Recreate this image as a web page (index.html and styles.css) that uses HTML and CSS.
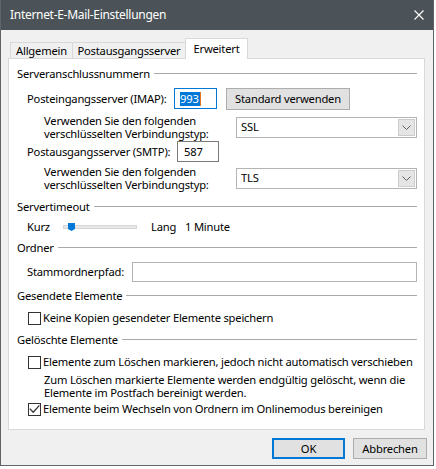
FILE: index.html
```html
<!DOCTYPE html>
<html lang="de">
<head>
<meta charset="utf-8">
<title>Internet-E-Mail-Einstellungen</title>
<link rel="stylesheet" href="styles.css">
</head>
<body>
<div class="dialog">
  <div class="titlebar">
    <span class="title">Internet-E-Mail-Einstellungen</span>
    <svg class="close" width="10" height="10" viewBox="0 0 10 10"><path d="M0.5 0.5L9.5 9.5M9.5 0.5L0.5 9.5" stroke="#ffffff" stroke-width="1.1" fill="none"/></svg>
  </div>
  <div class="client">
    <div class="tabs">
      <div class="tab tab-general">Allgemein</div>
      <div class="tab tab-outgoing">Postausgangsserver</div>
      <div class="tab tab-advanced active">Erweitert</div>
    </div>
    <div class="panel">
      <div class="group-head head-ports"><span class="group-title">Serveranschlussnummern</span><span class="rule"></span></div>
      <div class="row row-imap">
        <span class="label label-imap">Posteingangsserver (IMAP):</span>
        <span class="textbox focused port-in"><span class="selection">993</span><span class="caret"></span></span>
        <span class="button btn-default">Standard verwenden</span>
      </div>
      <div class="row row-enc enc-in">
        <span class="label label-enc">Verwenden Sie den folgenden<br>verschlüsselten Verbindungstyp:</span>
        <span class="combo"><span class="combo-value">SSL</span><span class="combo-arrow"><svg width="9" height="5" viewBox="0 0 9 5"><path d="M0.5 0.5L4.5 4.5L8.5 0.5" stroke="#606060" stroke-width="1" fill="none"/></svg></span></span>
      </div>
      <div class="row row-smtp">
        <span class="label label-smtp">Postausgangsserver (SMTP):</span>
        <span class="textbox port-out">587</span>
      </div>
      <div class="row row-enc enc-out">
        <span class="label label-enc">Verwenden Sie den folgenden<br>verschlüsselten Verbindungstyp:</span>
        <span class="combo"><span class="combo-value">TLS</span><span class="combo-arrow"><svg width="9" height="5" viewBox="0 0 9 5"><path d="M0.5 0.5L4.5 4.5L8.5 0.5" stroke="#606060" stroke-width="1" fill="none"/></svg></span></span>
      </div>

      <div class="group-head head-timeout"><span class="group-title">Servertimeout</span><span class="rule"></span></div>
      <div class="row row-slider">
        <span class="label label-short">Kurz</span>
        <span class="slider"><span class="track"></span><svg class="thumb" width="7" height="8" viewBox="0 0 7 8"><path d="M0 0H7V6L3.5 8L0 6Z" fill="#0078d7"/></svg></span>
        <span class="label label-long">Lang</span>
        <span class="label label-value">1 Minute</span>
      </div>

      <div class="group-head head-folder"><span class="group-title">Ordner</span><span class="rule"></span></div>
      <div class="row row-root">
        <span class="label label-root">Stammordnerpfad:</span>
        <span class="textbox root-path"></span>
      </div>

      <div class="group-head head-sent"><span class="group-title">Gesendete Elemente</span><span class="rule"></span></div>
      <div class="row row-check cb-sent">
        <span class="checkbox"></span>
        <span class="check-label">Keine Kopien gesendeter Elemente speichern</span>
      </div>

      <div class="group-head head-deleted"><span class="group-title">Gelöschte Elemente</span><span class="rule"></span></div>
      <div class="row row-check cb-mark">
        <span class="checkbox"></span>
        <span class="check-label">Elemente zum Löschen markieren, jedoch nicht automatisch verschieben</span>
      </div>
      <div class="note">Zum Löschen markierte Elemente werden endgültig gelöscht, wenn die<br>Elemente im Postfach bereinigt werden.</div>
      <div class="row row-check cb-purge">
        <span class="checkbox checked"><svg width="11" height="11" viewBox="0 0 11 11"><path d="M0.8 4.6L4.2 8.2L10.4 1.4" stroke="#333333" stroke-width="1.3" fill="none"/></svg></span>
        <span class="check-label">Elemente beim Wechseln von Ordnern im Onlinemodus bereinigen</span>
      </div>
    </div>
    <div class="buttons">
      <span class="button btn-ok">OK</span>
      <span class="button btn-cancel">Abbrechen</span>
    </div>
  </div>
</div>
</body>
</html>
```
FILE: styles.css
```css
* { box-sizing: border-box; }
html, body { margin: 0; padding: 0; }
body {
  width: 436px;
  height: 469px;
  overflow: hidden;
  background: #ffffff;
  font-family: "Segoe UI", "Noto Sans", "Open Sans", sans-serif;
  font-size: 11.2px;
  letter-spacing: -0.2px;
  color: #000000;
}
.dialog {
  width: 434px;
  height: 466px;
  border: 1px solid #5f6468;
  border-top: 0;
  background: #f0f0f0;
  display: flex;
  flex-direction: column;
}
.titlebar {
  height: 30px;
  flex: none;
  background: #4b5358;
  color: #ffffff;
  display: flex;
  align-items: center;
  justify-content: space-between;
  padding: 0 9px 0 9px;
}
.title { font-size: 12px; letter-spacing: -0.3px; line-height: 16px; }
.close { display: block; }

.client {
  flex: 1;
  display: flex;
  flex-direction: column;
  padding: 8px 6px 0 7px;
}
.tabs {
  display: flex;
  align-items: flex-end;
  height: 20px;
  padding-left: 2px;
}
.tab {
  height: 16px;
  border: 1px solid #d9d9d9;
  border-bottom: 0;
  background: #f0f0f0;
  display: flex;
  align-items: center;
  justify-content: center;
  margin-right: -1px;
  line-height: 14px;
  white-space: nowrap;
}
.tab-general { width: 63px; }
.tab-outgoing { width: 114px; }
.tab-advanced { width: 63px; }
.tab.active {
  height: 21px;
  background: #ffffff;
  margin-bottom: -1px;
  position: relative;
  z-index: 1;
  padding-bottom: 1px;
}
.panel {
  width: 417px;
  height: 372px;
  flex: none;
  border: 1px solid #d9d9d9;
  background: #ffffff;
  padding: 7px 7px 0 8px;
  display: flex;
  flex-direction: column;
}
.group-head {
  height: 16px;
  display: flex;
  align-items: center;
  line-height: 16px;
  white-space: nowrap;
}
.rule {
  flex: 1;
  height: 1px;
  background: #a9a9a9;
  margin-left: 4px;
  margin-top: -1px;
}
.row {
  display: flex;
  align-items: center;
  white-space: nowrap;
}
.label { flex: none; line-height: 14px; }
.row-imap { height: 21px; margin-top: 6px; padding-left: 10px; }
.row-smtp { height: 21px; margin-top: 1px; padding-left: 10px; }
.row-enc { height: 26px; padding-left: 27px; }
.enc-in { margin-top: 5px; }
.enc-out { margin-top: 3px; }
.label-imap { width: 147px; }
.label-smtp { width: 150px; }
.label-enc { width: 192px; line-height: 13px; }

.textbox {
  display: flex;
  align-items: center;
  height: 21px;
  border: 1px solid #7a7a7a;
  background: #ffffff;
  flex: none;
}
.port-in {
  width: 43px;
  border-color: #0078d7;
  padding-left: 5px;
}
.selection {
  background: #0078d7;
  color: #ffffff;
  line-height: 14px;
  height: 14px;
  padding: 0 1px 0 0;
}
.caret {
  width: 1px;
  height: 14px;
  background: #e8761c;
}
.port-out { width: 42px; padding-left: 6px; }

.button {
  display: flex;
  align-items: center;
  justify-content: center;
  background: #e1e1e1;
  border: 1px solid #adadad;
  height: 21px;
  flex: none;
  line-height: 14px;
}
.btn-default { width: 124px; height: 22px; margin-left: 9px; }

.combo {
  display: flex;
  align-items: center;
  width: 181px;
  height: 21px;
  border: 1px solid #b4b4b4;
  background: #ffffff;
  padding: 1px;
  flex: none;
}
.combo-value { flex: 1; padding-left: 3px; line-height: 14px; }
.combo-arrow {
  width: 17px;
  height: 17px;
  background: #e5e5e5;
  border: 1px solid #cccccc;
  display: flex;
  align-items: center;
  justify-content: center;
}
.combo-arrow svg { display: block; }

.head-timeout { margin-top: 8px; }
.row-slider { height: 16px; margin-top: 4px; padding-left: 10px; }
.label-short { width: 36px; }
.slider {
  position: relative;
  width: 74px;
  height: 8px;
  flex: none;
  display: flex;
  align-items: center;
}
.track {
  width: 74px;
  height: 4px;
  background: #e7e7e7;
  border: 1px solid #d6d6d6;
}
.thumb {
  position: absolute;
  left: 5px;
  top: 0;
  display: block;
}
.label-long { margin-left: 14px; width: 34px; }

.head-folder { margin-top: 5px; }
.row-root { height: 20px; margin-top: 6px; padding-left: 10px; }
.label-root { width: 105px; }
.root-path { width: 285px; height: 20px; border-color: #b4b4b4; }

.head-sent { margin-top: 6px; }
.row-check { height: 16px; margin-top: 6px; padding-left: 11px; }
.checkbox {
  width: 13px;
  height: 13px;
  border: 1px solid #333333;
  background: #ffffff;
  flex: none;
  display: flex;
  align-items: center;
  justify-content: center;
}
.checkbox svg { display: block; }
.check-label { margin-left: 2px; line-height: 14px; }
.head-deleted { margin-top: 6px; }
.cb-mark { margin-top: 6px; }
.note {
  margin-top: 3px;
  height: 26px;
  padding-left: 27px;
  line-height: 13px;
  white-space: nowrap;
}
.cb-purge { margin-top: 2px; }

.buttons {
  display: flex;
  justify-content: flex-end;
  gap: 8px;
  margin-top: 8px;
}
.btn-ok { width: 73px; border: 2px solid #0078d7; }
.btn-cancel { width: 74px; }
```
